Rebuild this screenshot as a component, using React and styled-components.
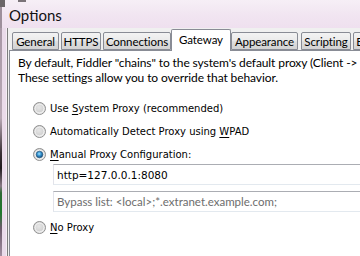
import React from 'react';
import styled, { createGlobalStyle } from 'styled-components';

const GlobalStyle = createGlobalStyle`
  html, body {
    margin: 0;
    padding: 0;
    width: 360px;
    height: 256px;
    overflow: hidden;
    background: #f0f0f0;
  }
`;

const TABS = [
  { label: 'General', w: 47, ml: 0 },
  { label: 'HTTPS', w: 40, ml: 2 },
  { label: 'Connections', w: 68, ml: 2 },
  { label: 'Gateway', w: 60, ml: 0, active: true },
  { label: 'Appearance', w: 67, ml: 0 },
  { label: 'Scripting', w: 50, ml: 3 },
  { label: 'Extensions', w: 60, ml: 2 },
];

// Win7 style radio button
function Radio({ checked }) {
  return (
    <svg width='13' height='13' viewBox='0 0 13 13'>
      <defs>
        <radialGradient id='rb-bg' cx='0.45' cy='0.4' r='0.6'>
          <stop offset='0' stopColor='#e6e6e6' />
          <stop offset='0.7' stopColor='#d2d2d2' />
          <stop offset='1' stopColor='#f4f4f4' />
        </radialGradient>
        <radialGradient id='rb-dot' cx='0.45' cy='0.4' r='0.6'>
          <stop offset='0' stopColor='#a6e4ff' />
          <stop offset='0.45' stopColor='#3d9ad6' />
          <stop offset='1' stopColor='#114a7c' />
        </radialGradient>
      </defs>
      <circle cx='6.5' cy='6.5' r='6' fill='url(#rb-bg)' stroke='#8f8f8f' />
      <circle cx='6.5' cy='6.5' r='4.4' fill='none' stroke='#f8f8f8' strokeWidth='0.8' />
      {checked && <circle cx='6.5' cy='6.5' r='3.3' fill='url(#rb-dot)' stroke='#21577f' strokeWidth='0.6' />}
    </svg>
  );
}

function Option({ checked, pre, hot, post, top }) {
  return (
    <OptionRow $top={top}>
      <Radio checked={checked} />
      <OptionLabel>
        {pre}
        <u>{hot}</u>
        {post}
      </OptionLabel>
    </OptionRow>
  );
}

function App() {
  return (
    <Window>
      <GlobalStyle />
      <TitleBar>
        <Title>Options</Title>
      </TitleBar>
      <Body>
        <LeftFrame />
        <Client>
          <TabStrip>
            {TABS.map((tab) => (
              <Tab key={tab.label} $w={tab.w} $ml={tab.ml} $active={tab.active}>
                {tab.label}
              </Tab>
            ))}
          </TabStrip>
          <Panel>
            <Intro>
              By default, Fiddler "chains" to the system's default proxy (Client -&gt; Fiddler -&gt; Gateway)
              <br />
              These settings allow you to override that behavior.
            </Intro>
            <Options>
              <Option top={15} pre='Use ' hot='S' post='ystem Proxy (recommended)' />
              <Option top={7} pre='Automatically Detect Proxy using ' hot='W' post='PAD' />
              <Option top={7} checked pre='' hot='M' post='anual Proxy Configuration:' />
              <TextBox $top={2}>http=127.0.0.1:8080</TextBox>
              <TextBox $top={6} $muted>
                Bypass list: &lt;local&gt;;*.extranet.example.com;
              </TextBox>
              <Option top={7} pre='' hot='N' post='o Proxy' />
            </Options>
          </Panel>
        </Client>
      </Body>
    </Window>
  );
}

const Window = styled.div`
  width: 360px;
  height: 256px;
  display: flex;
  flex-direction: column;
  overflow: hidden;
`;

const TitleBar = styled.div`
  height: 28px;
  flex: none;
  display: flex;
  align-items: flex-start;
  background:
    linear-gradient(to bottom, #6b6668 0 7px, transparent 7px) 0 0 / 5px 100% no-repeat,
    linear-gradient(to bottom, #7a7378 0 2px, transparent 2px) 18px 0 / 8px 100% no-repeat,
    linear-gradient(to right, #9d8f9b 0 2px, transparent 2px),
    linear-gradient(to bottom, #f6eff6 0%, #f1e5f1 55%, #efe0ef 100%);
`;

const Title = styled.div`
  margin: 6px 0 0 9px;
  font-family: Lato, 'Open Sans', sans-serif;
  font-size: 15px;
  line-height: 18px;
  color: #111;
`;

const Body = styled.div`
  flex: 1;
  display: flex;
  min-height: 0;
`;

const LeftFrame = styled.div`
  width: 8px;
  flex: none;
  background:
    linear-gradient(
        to bottom,
        #a898a6 0px,
        #b9a9b6 90px,
        #3a3036 125px,
        #201a1e 140px,
        #8a7a86 158px,
        #2e6a35 165px,
        #1f7a2c 185px,
        #6b5a6a 200px,
        #a38fa2 228px
      )
      0 0 / 2px 100% no-repeat,
    linear-gradient(to right, transparent 0 2px, #eadbea 2px 6px, #f5eef5 6px 7px, #7d7d7d 7px 8px);
`;

const Client = styled.div`
  flex: 1;
  display: flex;
  flex-direction: column;
  background: #f0f0f0;
  overflow: hidden;
  padding-left: 1px;
`;

const TabStrip = styled.div`
  height: 22px;
  flex: none;
  display: flex;
  align-items: flex-end;
  padding-left: 3px;
  position: relative;
  z-index: 1;
`;

const Tab = styled.div`
  box-sizing: border-box;
  flex: none;
  width: ${(p) => p.$w}px;
  margin-left: ${(p) => p.$ml}px;
  height: ${(p) => (p.$active ? 22 : 18)}px;
  border: 1px solid #898c95;
  border-bottom: ${(p) => (p.$active ? 'none' : '1px solid #898c95')};
  border-radius: 2px 2px 0 0;
  background: ${(p) =>
    p.$active ? '#ffffff' : 'linear-gradient(to bottom, #f3f3f3 0%, #ebebeb 45%, #dedede 55%, #d3d3d3 100%)'};
  display: flex;
  justify-content: center;
  align-items: center;
  padding-bottom: ${(p) => (p.$active ? 3 : 0)}px;
  font-family: Lato, 'Open Sans', sans-serif;
  font-size: 11.5px;
  letter-spacing: -0.1px;
  color: #000;
  white-space: nowrap;
  overflow: hidden;
  margin-bottom: ${(p) => (p.$active ? -1 : 0)}px;
`;

const Panel = styled.div`
  flex: 1;
  width: 420px;
  background: #fff;
  border: 1px solid #898c95;
  border-right: none;
  border-bottom: none;
`;

const Intro = styled.div`
  padding: 4px 0 0 8px;
  font-family: Lato, 'Open Sans', sans-serif;
  font-size: 12px;
  letter-spacing: -0.1px;
  line-height: 15px;
  color: #000;
  white-space: nowrap;
`;

const Options = styled.div`
  display: flex;
  flex-direction: column;
  padding-left: 23px;
`;

const OptionRow = styled.div`
  display: flex;
  align-items: center;
  gap: 4px;
  height: 16px;
  margin-top: ${(p) => p.$top}px;

  svg {
    flex: none;
  }
`;

const OptionLabel = styled.span`
  font-family: 'DejaVu Sans', Verdana, sans-serif;
  font-size: 10px;
  color: #000;
  white-space: nowrap;

  u {
    text-underline-offset: 2px;
  }
`;

const TextBox = styled.div`
  box-sizing: border-box;
  margin: ${(p) => p.$top}px 0 0 20px;
  height: 21px;
  border: 1px solid #e2e3ea;
  border-top-color: #abadb3;
  border-bottom-color: #e3e9ef;
  border-right: none;
  padding-left: 3px;
  display: flex;
  align-items: center;
  font-family: ${(p) => (p.$muted ? "Lato, 'Open Sans', sans-serif" : "'DejaVu Sans', Verdana, sans-serif")};
  font-size: ${(p) => (p.$muted ? 11.5 : 10.5)}px;
  color: ${(p) => (p.$muted ? '#6d6d6d' : '#000')};
  white-space: nowrap;
`;

export default App;
